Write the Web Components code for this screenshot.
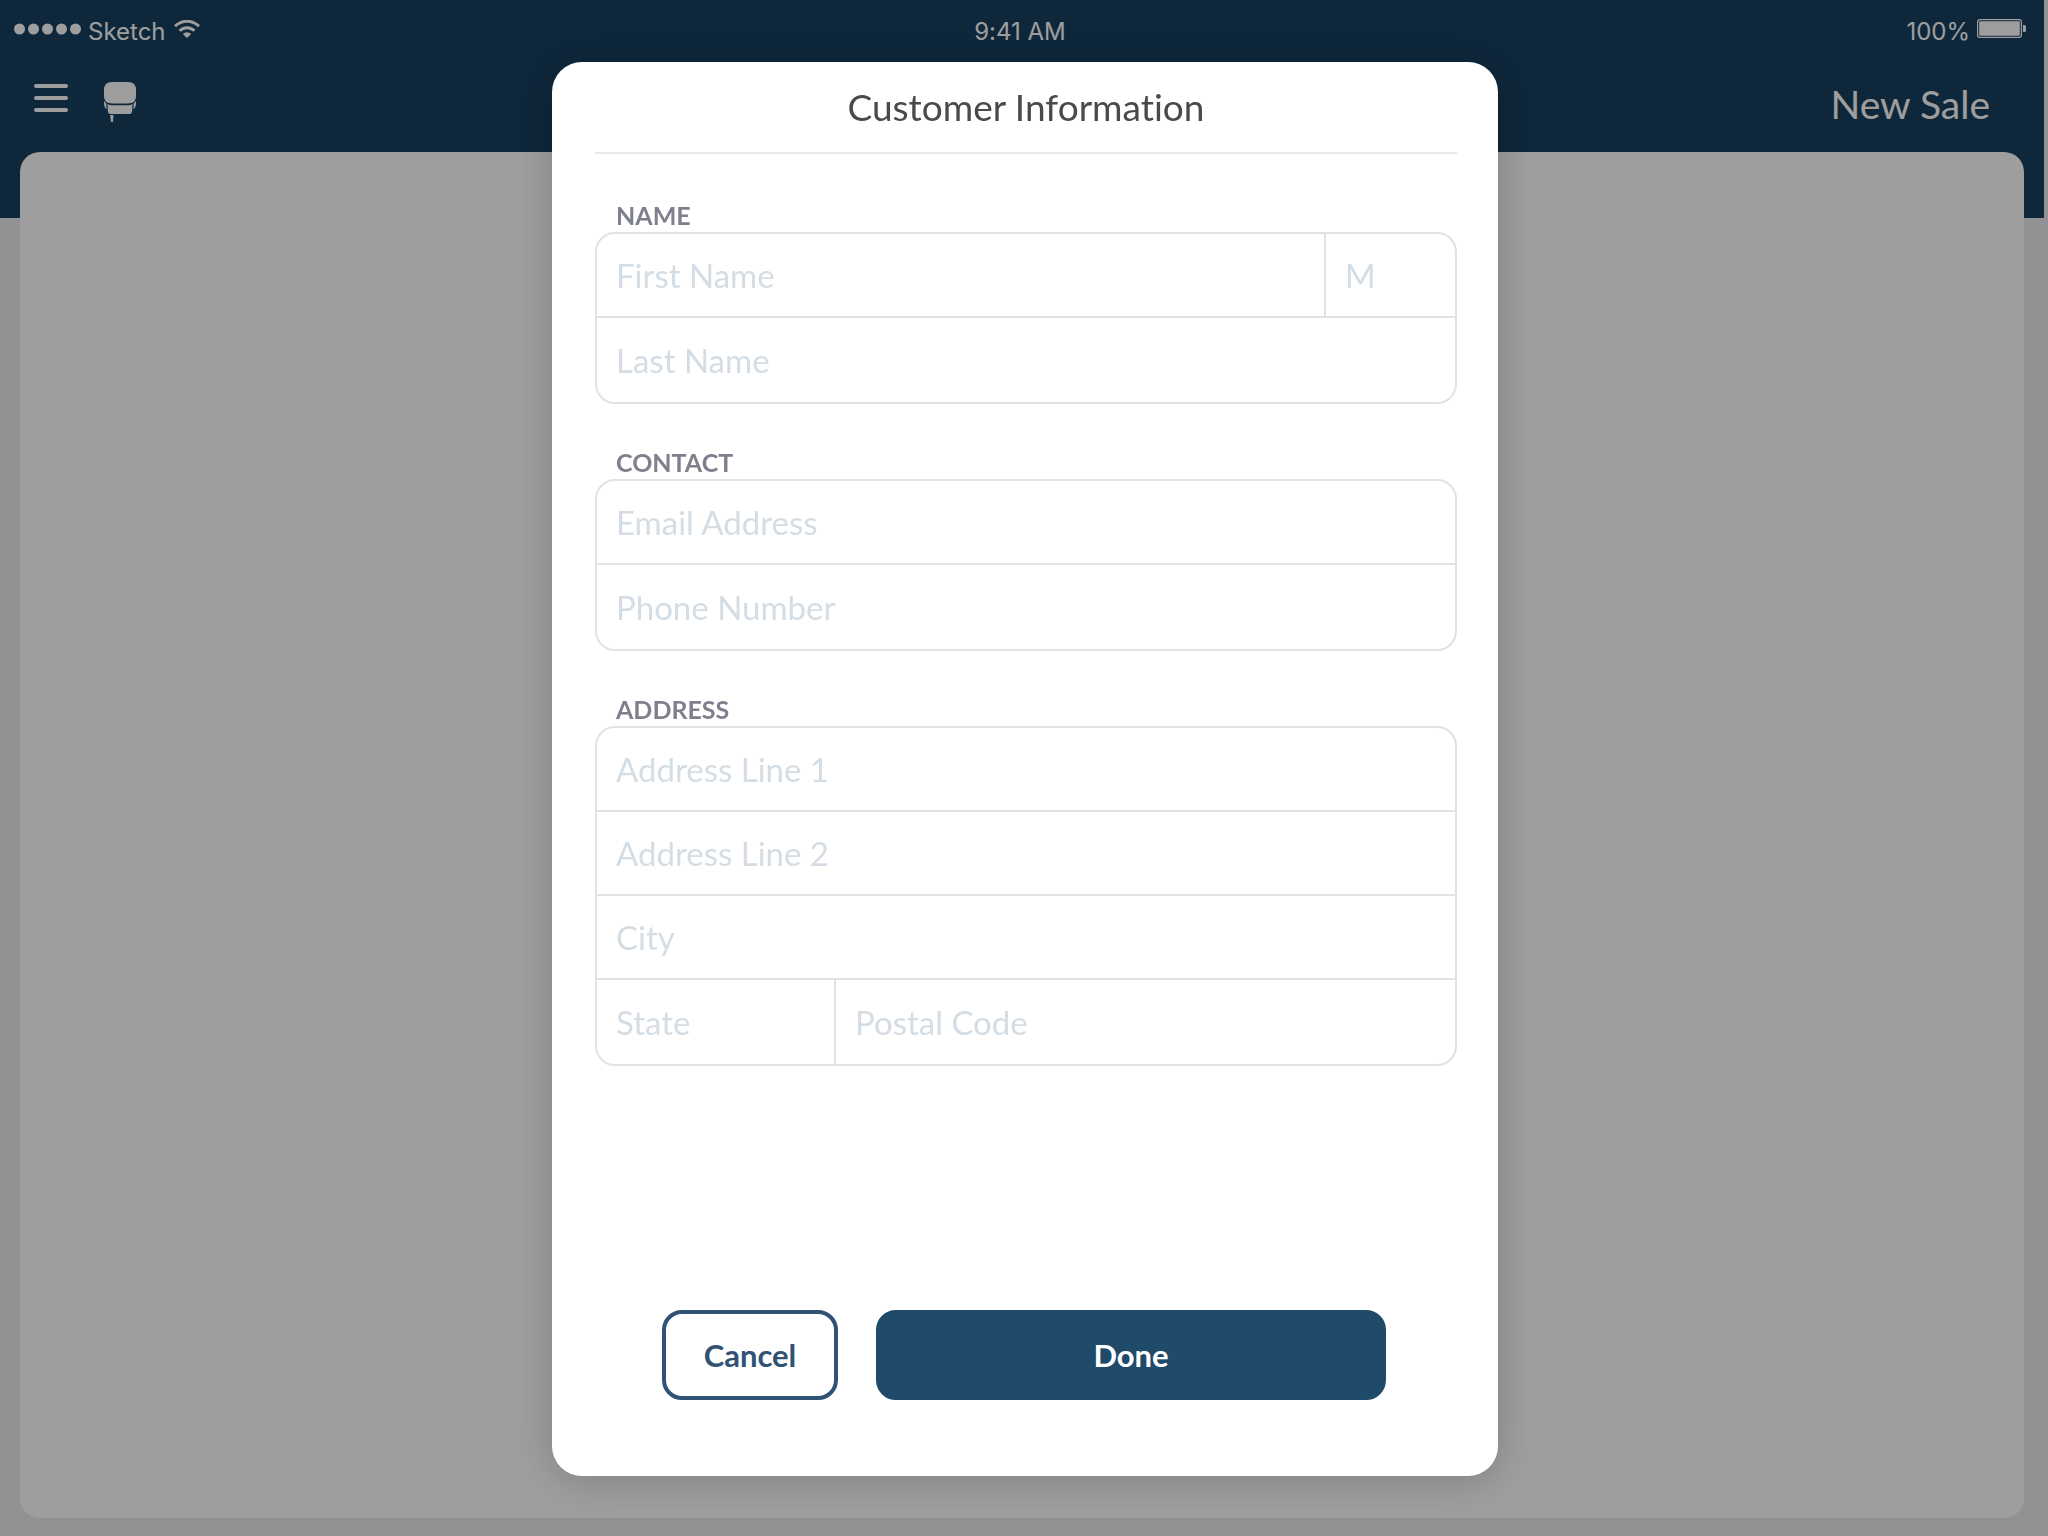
<!DOCTYPE html>
<html lang="en">
<head>
<meta charset="utf-8">
<meta name="viewport" content="width=device-width, initial-scale=1">
<title>New Sale</title>
<style>
    body {
        margin: 0;
        font-family: Lato, "Open Sans", sans-serif;
        font-variant-ligatures: none;
    }
</style>
</head>
<body>

<sale-app>
    <status-bar carrier="Sketch" time="9:41 AM" battery="100%"></status-bar>
    <nav-bar>New Sale</nav-bar>
</sale-app>

<modal-dialog heading="Customer Information">
    <field-group label="Name">
        <field-row>
            <text-field name="first-name" placeholder="First Name" autocomplete="given-name"></text-field>
            <text-field name="middle" placeholder="M" width="131"></text-field>
        </field-row>
        <field-row>
            <text-field name="last-name" placeholder="Last Name"></text-field>
        </field-row>
    </field-group>
    <field-group label="Contact">
        <field-row>
            <text-field name="email" type="email" placeholder="Email Address"></text-field>
        </field-row>
        <field-row>
            <text-field name="phone" type="tel" placeholder="Phone Number"></text-field>
        </field-row>
    </field-group>
    <field-group label="Address">
        <field-row>
            <text-field name="address1" placeholder="Address Line 1"></text-field>
        </field-row>
        <field-row>
            <text-field name="address2" placeholder="Address Line 2"></text-field>
        </field-row>
        <field-row>
            <text-field name="city" placeholder="City"></text-field>
        </field-row>
        <field-row>
            <text-field name="state" placeholder="State" width="237"></text-field>
            <text-field name="postal" placeholder="Postal Code"></text-field>
        </field-row>
    </field-group>
    <action-button slot="actions" kind="outline">Cancel</action-button>
    <action-button slot="actions" kind="primary">Done</action-button>
</modal-dialog>

<script>
/**
 * Shared setup: clones the styles and the markup of a class into its shadow root.
 */
class BaseElement extends HTMLElement {

    static get styles() {
        return '';
    }

    static get markup() {
        return '<slot></slot>';
    }

    constructor() {
        super();
        const template = document.createElement('template');
        template.innerHTML = `<style>${this.constructor.styles}</style>${this.constructor.markup}`;
        this.attachShadow({ mode: 'open' });
        this.shadowRoot.appendChild(template.content.cloneNode(true));
    }

    find(selector) {
        return this.shadowRoot.querySelector(selector);
    }
}

/**
 * The page behind the dialog: bars on top, an empty work panel below.
 *
 * @element sale-app
 */
class SaleApp extends BaseElement {

    static get styles() {
        return `
            :host {
                display: flex;
                flex-direction: column;
                box-sizing: border-box;
                min-height: 100vh;
                padding: 0 4px 18px 0;
                background: linear-gradient(#183f5f, #183f5f) 0 0 / calc(100% - 4px) 218px no-repeat #ebebef;
                color: #ffffff;
            }
            main {
                flex: 1;
                margin: 0 20px;
                border-radius: 20px;
                background: #ffffff;
            }
        `;
    }

    static get markup() {
        return `
            <slot></slot>
            <main></main>
        `;
    }
}

/**
 * Device status line.
 *
 * @element status-bar
 */
class StatusBar extends BaseElement {

    static get styles() {
        return `
            :host {
                display: grid;
                grid-template-columns: 1fr auto 1fr;
                align-items: center;
                box-sizing: border-box;
                height: 62px;
                padding: 2px 18px 0 14px;
                font-family: Inter, Roboto, sans-serif;
                font-size: 24px;
                line-height: 30px;
            }
            div {
                display: flex;
                align-items: center;
                gap: 7px;
            }
            .right {
                justify-content: flex-end;
            }
            svg {
                display: block;
                fill: currentColor;
                padding-bottom: 6px;
            }
        `;
    }

    static get markup() {
        return `
            <div>
                <svg width="67" height="12" viewBox="0 0 67 12" aria-hidden="true">
                    <circle cx="5.5" cy="6" r="5.5"/>
                    <circle cx="19.5" cy="6" r="5.5"/>
                    <circle cx="33.5" cy="6" r="5.5"/>
                    <circle cx="47.5" cy="6" r="5.5"/>
                    <circle cx="61.5" cy="6" r="5.5"/>
                </svg>
                <span id="carrier"></span>
                <svg width="28" height="18" viewBox="0 0 28 18" aria-hidden="true">
                    <path d="M14 18 L9.8 13.9 A6 6 0 0 1 18.2 13.9 Z"/>
                    <path d="M6.6 10.8 A10.4 10.4 0 0 1 21.4 10.8" fill="none" stroke="currentColor" stroke-width="2.9"/>
                    <path d="M2 6.3 A17 17 0 0 1 26 6.3" fill="none" stroke="currentColor" stroke-width="2.9"/>
                </svg>
            </div>
            <span id="time"></span>
            <div class="right">
                <span id="battery"></span>
                <svg width="49" height="20" viewBox="0 0 49 20" aria-hidden="true">
                    <rect x=".6" y=".6" width="43.8" height="17.8" rx="2.4" fill="none" stroke="currentColor" stroke-width="1.2"/>
                    <rect x="2.2" y="2.2" width="40.6" height="14.6" rx="1"/>
                    <path d="M46 6 h1.5 q1.5 0 1.5 1.5 v4 q0 1.5 -1.5 1.5 h-1.5 z"/>
                </svg>
            </div>
        `;
    }

    connectedCallback() {
        for (const id of ['carrier', 'time', 'battery']) {
            this.find('#' + id).textContent = this.getAttribute(id);
        }
    }
}

/**
 * Menu, seat icon and page title.
 *
 * @element nav-bar
 */
class NavBar extends BaseElement {

    static get styles() {
        return `
            :host {
                display: flex;
                align-items: flex-start;
                box-sizing: border-box;
                height: 90px;
                padding: 20px 54px 0 34px;
            }
            nav {
                display: flex;
                gap: 36px;
                flex: 1;
            }
            button {
                padding: 0;
                border: none;
                background: none;
                color: inherit;
                cursor: pointer;
            }
            svg {
                display: block;
                fill: currentColor;
            }
            h1 {
                margin: 0;
                font-size: 39px;
                font-weight: 400;
                line-height: 44px;
            }
        `;
    }

    static get markup() {
        return `
            <nav>
                <button type="button" aria-label="Menu">
                    <svg width="34" height="40" viewBox="0 0 34 40">
                        <rect y="2" width="34" height="4" rx="2"/>
                        <rect y="14" width="34" height="4" rx="2"/>
                        <rect y="26" width="34" height="4" rx="2"/>
                    </svg>
                </button>
                <button type="button" aria-label="Seats">
                    <svg width="32" height="40" viewBox="0 0 32 40">
                        <path d="M8 0 H24 Q32 0 32 8 V14 Q32 21.5 24 21.5 H8 Q0 21.5 0 14 V8 Q0 0 8 0 Z"/>
                        <path d="M3.5 22 Q5.5 23.2 8 23.2 H24 Q26.5 23.2 28.5 22 L28 30 Q27.6 32 25.5 32 H6.5 Q4.4 32 4 30 Z"/>
                        <path d="M0 18.5 Q.8 20.5 2.4 21.6 L2.6 27.5 Q0 25.5 0 22 Z"/>
                        <path d="M32 18.5 Q31.2 20.5 29.6 21.6 L29.4 27.5 Q32 25.5 32 22 Z"/>
                        <path d="M6 33 H9.5 L9 40 H7 Z"/>
                    </svg>
                </button>
            </nav>
            <h1><slot></slot></h1>
        `;
    }
}

/**
 * Dialog over a dimmed page.
 *
 * @element modal-dialog
 */
class ModalDialog extends BaseElement {

    static get styles() {
        return `
            :host {
                position: fixed;
                inset: 0;
                display: flex;
                justify-content: center;
                box-sizing: border-box;
                padding: 62px 0 60px 2px;
                background: rgba(0, 0, 0, 0.38);
            }
            form {
                display: flex;
                flex-direction: column;
                box-sizing: border-box;
                width: 100%;
                max-width: 946px;
                padding: 0 41px 76px 43px;
                border-radius: 30px;
                background: #ffffff;
                box-shadow: 0 4px 40px rgba(0, 0, 0, 0.2);
            }
            h2 {
                margin: 0;
                border-bottom: 2px solid #e4e9ed;
                color: #4a4a4a;
                font-size: 37px;
                font-weight: 400;
                line-height: 90px;
                text-align: center;
            }
            .fields {
                display: flex;
                flex-direction: column;
                gap: 41px;
                flex: 1;
                padding-top: 44px;
            }
            footer {
                display: flex;
                gap: 38px;
                padding: 0 71px 0 67px;
            }
        `;
    }

    static get markup() {
        return `
            <form role="dialog" aria-labelledby="heading">
                <h2 id="heading"></h2>
                <div class="fields"><slot></slot></div>
                <footer><slot name="actions"></slot></footer>
            </form>
        `;
    }

    connectedCallback() {
        this.find('h2').textContent = this.getAttribute('heading');
    }
}

/**
 * Caption over a rounded box of rows.
 *
 * @element field-group
 */
class FieldGroup extends BaseElement {

    static get styles() {
        return `
            :host {
                display: block;
            }
            #label {
                padding-left: 21px;
                color: #7f808d;
                font-size: 25px;
                font-weight: 700;
                line-height: 34px;
                text-transform: uppercase;
            }
            .box {
                border: 2px solid #e2e2e2;
                border-radius: 20px;
                overflow: hidden;
            }
            ::slotted(*) {
                height: 82px;
            }
            ::slotted(:last-child) {
                height: 84px;
            }
            ::slotted(:not(:first-child)) {
                border-top: 2px solid #e2e2e2;
            }
        `;
    }

    static get markup() {
        return `
            <div role="group" aria-labelledby="label">
                <div id="label"></div>
                <div class="box"><slot></slot></div>
            </div>
        `;
    }

    connectedCallback() {
        this.find('#label').textContent = this.getAttribute('label');
    }
}

/**
 * One line of fields.
 *
 * @element field-row
 */
class FieldRow extends BaseElement {

    static get styles() {
        return `
            :host {
                display: flex;
            }
            ::slotted(:not(:first-child)) {
                border-left: 2px solid #e2e2e2;
            }
        `;
    }
}

/**
 * A text box. Takes the free width of its row unless a width is given.
 *
 * @element text-field
 */
class TextField extends BaseElement {

    static get styles() {
        return `
            :host {
                display: flex;
                flex: 1;
                box-sizing: border-box;
                min-width: 0;
            }
            input {
                flex: 1;
                min-width: 0;
                margin: 0;
                padding: 0 19px;
                border: none;
                outline: none;
                background: none;
                color: #4a4a4a;
                font-family: inherit;
                font-size: 33px;
            }
            input::placeholder {
                color: #d5dde4;
                opacity: 1;
            }
        `;
    }

    static get markup() {
        return '<input type="text">';
    }

    static get observedAttributes() {
        return ['name', 'type', 'placeholder', 'autocomplete', 'width'];
    }

    attributeChangedCallback(name, oldValue, newValue) {
        if (name === 'width') {
            this.style.flex = `0 0 ${newValue}px`;
            return;
        }
        const input = this.find('input');
        input.setAttribute(name, newValue);
        if (name === 'placeholder') {
            input.setAttribute('aria-label', newValue);
        }
    }
}

/**
 * Dialog button, outline or primary.
 *
 * @element action-button
 */
class ActionButton extends BaseElement {

    static get styles() {
        return `
            :host {
                display: flex;
                flex: 1;
            }
            :host([kind="outline"]) {
                flex: 0 0 176px;
            }
            button {
                flex: 1;
                height: 90px;
                padding: 0;
                border: 4px solid #1f4a69;
                border-radius: 20px;
                background: #1f4a69;
                color: #ffffff;
                font-family: inherit;
                font-size: 31px;
                font-weight: 700;
                cursor: pointer;
            }
            :host([kind="outline"]) button {
                border-color: #305275;
                background: #ffffff;
                color: #305275;
            }
        `;
    }

    static get markup() {
        return '<button type="button"><slot></slot></button>';
    }
}

customElements.define('sale-app', SaleApp);
customElements.define('status-bar', StatusBar);
customElements.define('nav-bar', NavBar);
customElements.define('modal-dialog', ModalDialog);
customElements.define('field-group', FieldGroup);
customElements.define('field-row', FieldRow);
customElements.define('text-field', TextField);
customElements.define('action-button', ActionButton);
</script>
</body>
</html>
